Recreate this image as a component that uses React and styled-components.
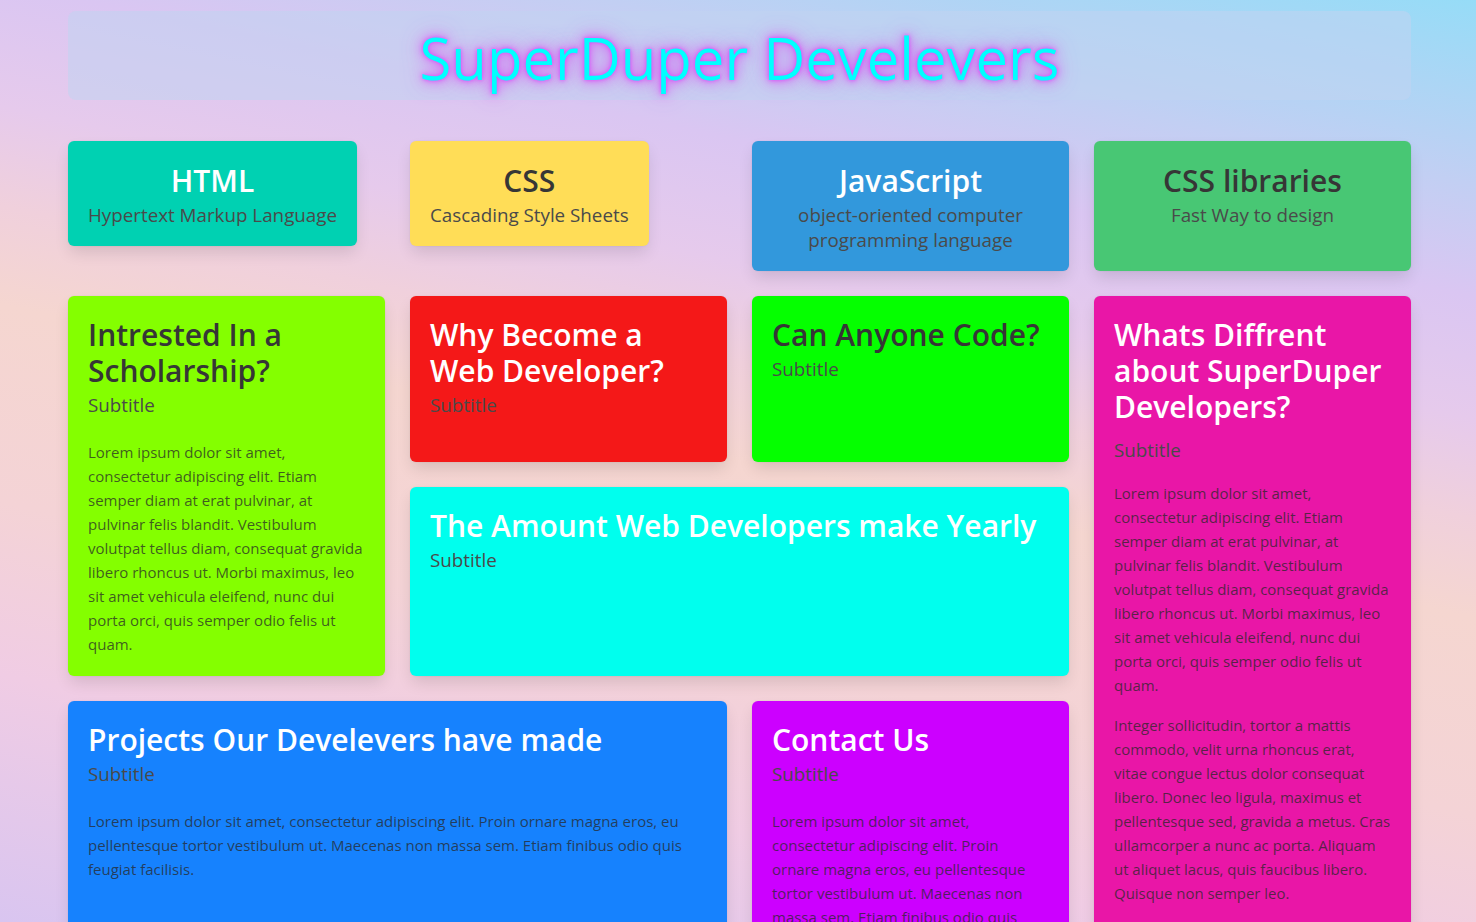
import styled, { createGlobalStyle } from 'styled-components';

// Page background and base font
const GlobalStyle = createGlobalStyle`
    html, body {
        margin: 0;
        padding: 0;
    }
    body {
        min-height: 100vh;
        font-family: 'Segoe UI', 'Open Sans', 'Noto Sans', sans-serif;
        background: linear-gradient(192deg, #96dcf7 0%, #c2cff3 15%, #dac6f2 24%, #e6caec 34%, #f0d0dc 42%, #f5d6d0 50%, #f4d3d6 66%, #f0cce4 80%, #d9c5f0 100%);
        background-attachment: fixed;
        overflow: hidden;
    }
`;

const Page = styled.div`
    width: 1343px;
    margin-left: 68px;
    padding-top: 11px;
`;

const Header = styled.header`
    background: rgba(193, 211, 240, 0.55);
    border-radius: 8px;
    padding: 11px 0 6px;
    text-align: center;
`;

const Brand = styled.h1`
    margin: 0;
    font-size: 58px;
    line-height: 72px;
    font-weight: 400;
    color: #00ffff;
    text-shadow: 0 0 4px #e040fb, 0 0 12px #d84cf2, 0 0 22px rgba(216, 76, 242, 0.75);
`;

const TopRow = styled.div`
    display: grid;
    grid-template-columns: repeat(4, 1fr);
    column-gap: 25px;
    margin-top: 41px;
`;

const Board = styled.div`
    display: grid;
    grid-template-columns: repeat(4, 1fr);
    grid-template-rows: 166px 189px auto;
    grid-template-areas:
        'sch red green pink'
        'sch cyan cyan pink'
        'proj proj contact pink';
    gap: 25px;
    margin-top: 25px;
`;

const Card = styled.article`
    grid-area: ${(p) => p.$area || 'auto'};
    background: ${(p) => p.$bg};
    border-radius: 6px;
    padding: ${(p) => (p.$center ? '22px 20px 18px' : '21px 20px 20px')};
    box-shadow: 0 8px 16px -2px rgba(10, 10, 10, 0.12), 0 0 0 1px rgba(10, 10, 10, 0.02);
    text-align: ${(p) => (p.$center ? 'center' : 'left')};
    justify-self: ${(p) => (p.$fit ? 'start' : 'stretch')};
    align-self: ${(p) => (p.$fit ? 'start' : 'stretch')};
    width: ${(p) => (p.$fit ? 'fit-content' : 'auto')};
    box-sizing: border-box;
`;

const Title = styled.h2`
    margin: 0 0 ${(p) => p.$gap || 4}px;
    font-size: 30px;
    line-height: 36px;
    font-weight: 600;
    color: ${(p) => (p.$light ? '#ffffff' : '#363636')};
    white-space: ${(p) => (p.$nowrap ? 'nowrap' : 'normal')};
`;

const Subtitle = styled.p`
    margin: 0;
    font-size: 18.8px;
    line-height: 25px;
    font-weight: 400;
    color: #4a4a4a;

    &:not(:last-child) {
        margin-bottom: ${(p) => p.$gap || 22}px;
    }
`;

const Text = styled.p`
    margin: 0;
    font-size: 15px;
    line-height: 24px;
    letter-spacing: ${(p) => (p.$tight ? '-0.03px' : 'normal')};
    color: rgba(40, 40, 40, 0.75);

    & + & {
        margin-top: 16px;
    }
`;

const lorem =
    'Lorem ipsum dolor sit amet, consectetur adipiscing elit. Etiam semper diam at erat pulvinar, at pulvinar felis blandit. Vestibulum volutpat tellus diam, consequat gravida libero rhoncus ut. Morbi maximus, leo sit amet vehicula eleifend, nunc dui porta orci, quis semper odio felis ut quam.';

const loremShort =
    'Lorem ipsum dolor sit amet, consectetur adipiscing elit. Proin ornare magna eros, eu pellentesque tortor vestibulum ut. Maecenas non massa sem. Etiam finibus odio quis feugiat facilisis.';

const topics = [
    { title: 'HTML', sub: 'Hypertext Markup Language', bg: '#00d1b2', light: true, fit: true },
    { title: 'CSS', sub: 'Cascading Style Sheets', bg: '#ffdd57', light: false, fit: true },
    { title: 'JavaScript', sub: 'object-oriented computer programming language', bg: '#3298dc', light: true },
    { title: 'CSS libraries', sub: 'Fast Way to design', bg: '#48c774', light: false },
];

function App() {
    return (
        <>
            <GlobalStyle />
            <Page>
                <Header>
                    <Brand>SuperDuper Develevers</Brand>
                </Header>

                <TopRow>
                    {topics.map((t) => (
                        <Card key={t.title} $bg={t.bg} $center $fit={t.fit}>
                            <Title $light={t.light}>{t.title}</Title>
                            <Subtitle>{t.sub}</Subtitle>
                        </Card>
                    ))}
                </TopRow>

                <Board>
                    <Card $area="sch" $bg="#84ff00">
                        <Title>Intrested In a Scholarship?</Title>
                        <Subtitle>Subtitle</Subtitle>
                        <Text>{lorem}</Text>
                    </Card>

                    <Card $area="red" $bg="#f41818">
                        <Title $light>Why Become a Web Developer?</Title>
                        <Subtitle>Subtitle</Subtitle>
                    </Card>

                    <Card $area="green" $bg="#05ff00">
                        <Title $nowrap>Can Anyone Code?</Title>
                        <Subtitle>Subtitle</Subtitle>
                    </Card>

                    <Card $area="pink" $bg="#e916a7">
                        <Title $light $gap={13}>Whats Diffrent about SuperDuper Developers?</Title>
                        <Subtitle $gap={18}>Subtitle</Subtitle>
                        <Text>{lorem}</Text>
                        <Text $tight>
                            Integer sollicitudin, tortor a mattis commodo, velit urna rhoncus erat, vitae congue lectus
                            dolor consequat libero. Donec leo ligula, maximus et pellentesque sed, gravida a metus. Cras
                            ullamcorper a nunc ac porta. Aliquam ut aliquet lacus, quis faucibus libero. Quisque non
                            semper leo.
                        </Text>
                    </Card>

                    <Card $area="cyan" $bg="#00ffee">
                        <Title $light $nowrap>The Amount Web Developers make Yearly</Title>
                        <Subtitle>Subtitle</Subtitle>
                    </Card>

                    <Card $area="proj" $bg="#1682fe">
                        <Title $light>Projects Our Develevers have made</Title>
                        <Subtitle>Subtitle</Subtitle>
                        <Text>{loremShort}</Text>
                    </Card>

                    <Card $area="contact" $bg="#cc00ff">
                        <Title $light>Contact Us</Title>
                        <Subtitle>Subtitle</Subtitle>
                        <Text>{loremShort}</Text>
                    </Card>
                </Board>
            </Page>
        </>
    );
}

export default App;
